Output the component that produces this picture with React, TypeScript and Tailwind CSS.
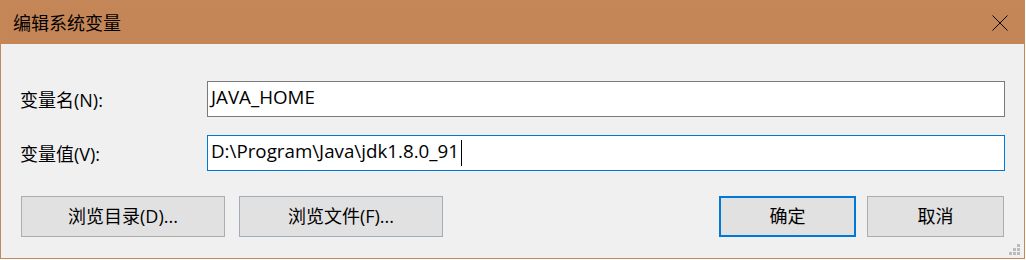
import React from "react";

const font = { fontFamily: '"Open Sans", "Noto Sans CJK SC", sans-serif' };

function Field({ label, value, focused }: { label: string; value: string; focused?: boolean }) {
    return (
        <div className="flex items-center">
            <div className="w-[187px] text-[18px] leading-none text-black pt-[1px]">{label}</div>
            <div
                className={
                    focused
                        ? "flex items-center w-[798px] h-[36px] bg-white border border-[#0078d7] pl-[3px] pb-[3px] text-[18.75px] leading-none text-black"
                        : "flex items-center w-[798px] h-[36px] bg-white border border-[#7a7a7a] pl-[3px] pb-[3px] text-[18.75px] leading-none text-black"
                }
            >
                <span>{value}</span>
                {focused && <span className="inline-block w-px h-[26px] bg-black ml-[2px] mt-[3px]" />}
            </div>
        </div>
    );
}

export default function App() {
    return (
        <div className="w-[1026px] h-[260px] bg-white" style={font}>
            <div className="relative w-[1025px] h-[259px] border border-[#c4875a] bg-[#f0f0f0] flex flex-col">

                <div className="flex items-center justify-between h-[43px] bg-[#c58657] pl-[12px] pr-[16px]">
                    <span className="text-[18px] leading-none text-black pt-[1px]">编辑系统变量</span>
                    <svg width="16" height="16" viewBox="0 0 16 16" className="mt-[1px]">
                        <path d="M0.5 0.5 L15.5 15.5 M15.5 0.5 L0.5 15.5" stroke="#000" strokeWidth="1" fill="none" />
                    </svg>
                </div>

                <div className="flex flex-col pl-[19px] pt-[37px]">
                    <div className="flex flex-col gap-[18px]">
                        <Field label="变量名(N):" value="JAVA_HOME" />
                        <Field label="变量值(V):" value="D:\Program\Java\jdk1.8.0_91" focused />
                    </div>

                    <div className="flex justify-between w-[984px] pl-[1px] mt-[25px]">
                        <div className="flex gap-[14px]">
                            <button className="w-[204px] h-[41px] bg-[#e1e1e1] border border-[#adadad] text-[18px] text-black">
                                浏览目录(D)...
                            </button>
                            <button className="w-[204px] h-[41px] bg-[#e1e1e1] border border-[#a2adb8] text-[18px] text-black">
                                浏览文件(F)...
                            </button>
                        </div>
                        <div className="flex gap-[11px]">
                            <button className="w-[137px] h-[41px] bg-[#e1e1e1] border-2 border-[#0078d7] text-[18px] text-black">
                                确定
                            </button>
                            <button className="w-[137px] h-[41px] bg-[#e1e1e1] border border-[#adadad] text-[18px] text-black">
                                取消
                            </button>
                        </div>
                    </div>
                </div>

                <svg width="12" height="12" viewBox="0 0 12 12" className="absolute right-[3px] bottom-[2px]">
                    <rect x="8" y="0" width="3" height="3" fill="#bcbcbc" />
                    <rect x="4" y="4" width="3" height="3" fill="#bcbcbc" />
                    <rect x="8" y="4" width="3" height="3" fill="#bcbcbc" />
                    <rect x="0" y="8" width="3" height="3" fill="#bcbcbc" />
                    <rect x="4" y="8" width="3" height="3" fill="#bcbcbc" />
                    <rect x="8" y="8" width="3" height="3" fill="#bcbcbc" />
                </svg>
            </div>
        </div>
    );
}
